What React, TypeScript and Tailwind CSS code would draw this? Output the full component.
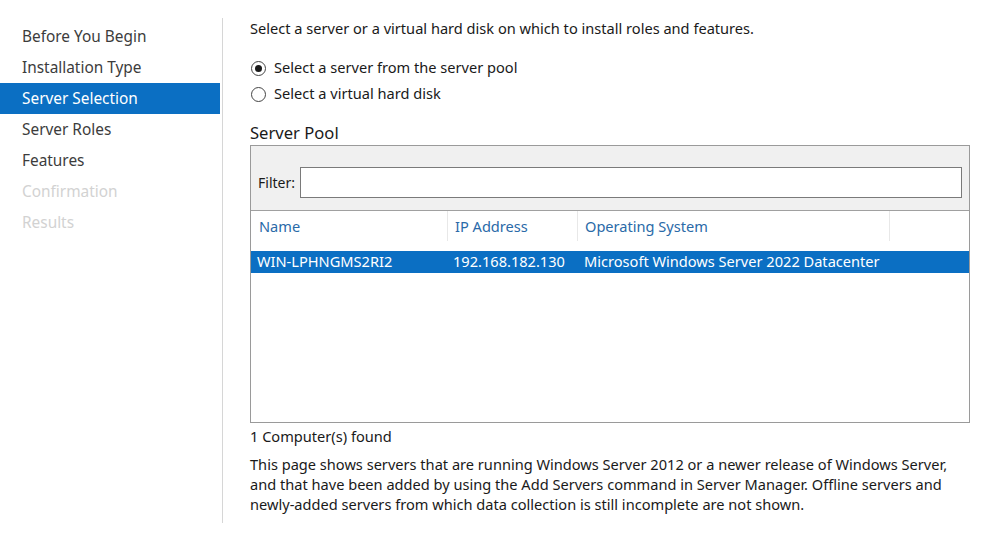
import React from 'react';

const steps = [
    { name: 'Before You Begin', state: 'done' },
    { name: 'Installation Type', state: 'done' },
    { name: 'Server Selection', state: 'active' },
    { name: 'Server Roles', state: 'done' },
    { name: 'Features', state: 'done' },
    { name: 'Confirmation', state: 'disabled' },
    { name: 'Results', state: 'disabled' },
];

function Radio({ checked, label }: { checked: boolean; label: string }) {
    return (
        <div className="flex items-center h-[26px]">
            <span className="w-[15px] h-[15px] rounded-full border border-[#444] bg-white flex items-center justify-center">
                {checked && <span className="w-[7px] h-[7px] rounded-full bg-[#1a1a1a]" />}
            </span>
            <span className="ml-[8px] text-[#1a1a1a]">{label}</span>
        </div>
    );
}

export default function App() {
    return (
        <div
            className="w-[982px] h-[543px] bg-white flex text-[14.6px] overflow-hidden"
            style={{ fontFamily: '"Noto Sans", "Open Sans", sans-serif' }}
        >
            {/* Wizard steps */}
            <div className="w-[222px] pt-[21px] shrink-0">
                {steps.map((s) => (
                    <div
                        key={s.name}
                        className={`h-[31px] pl-[22px] mr-[2px] flex items-center text-[15.4px] ${
                            s.state === 'active'
                                ? 'bg-[#0b6fc3] text-white'
                                : s.state === 'disabled'
                                  ? 'text-[#d2d2d2]'
                                  : 'text-[#3c3c3c]'
                        }`}
                    >
                        {s.name}
                    </div>
                ))}
            </div>

            {/* Divider */}
            <div className="w-px bg-[#d6d6d6] mt-[18px] mb-[20px] shrink-0" />

            {/* Main */}
            <div className="flex-1 pl-[27px] pr-[12px] pt-[17px]">
                <div className="text-[#1a1a1a] leading-[22px]">
                    Select a server or a virtual hard disk on which to install roles and features.
                </div>

                <div className="mt-[16px] ml-[1px]">
                    <Radio checked label="Select a server from the server pool" />
                    <Radio checked={false} label="Select a virtual hard disk" />
                </div>

                <div className="mt-[14px] text-[16.6px] text-[#1a1a1a] leading-[24px]">Server Pool</div>

                <div className="w-[720px] h-[278px] border border-[#9a9a9a] flex flex-col">
                    <div className="h-[65px] bg-[#f0f0f0] border-b border-[#a0a0a0] flex items-center pl-[7px] pr-[7px] pt-[8px]">
                        <span className="text-[#1a1a1a] text-[14px]">Filter:</span>
                        <div className="ml-[5px] flex-1 h-[31px] bg-white border border-[#7a7a7a]" />
                    </div>

                    <div className="flex-1 bg-white">
                        <div className="h-[40px] flex text-[#2a6aa8]">
                            <div className="w-[197px] pl-[8px] pt-[4px] leading-[22px] border-r border-[#e8e8e8] mb-[10px]">Name</div>
                            <div className="w-[130px] pl-[7px] pt-[4px] leading-[22px] border-r border-[#e8e8e8] mb-[10px]">IP Address</div>
                            <div className="w-[312px] pl-[7px] pt-[4px] leading-[22px] border-r border-[#e8e8e8] mb-[10px]">Operating System</div>
                        </div>
                        <div className="h-[22px] bg-[#0b6fc3] text-white flex items-center">
                            <div className="w-[197px] pl-[6px]">WIN-LPHNGMS2RI2</div>
                            <div className="w-[130px] pl-[5px]">192.168.182.130</div>
                            <div className="pl-[6px]">Microsoft Windows Server 2022 Datacenter</div>
                        </div>
                    </div>
                </div>

                <div className="mt-[2px] text-[#1a1a1a] leading-[22px]">1 Computer(s) found</div>

                <p className="mt-[7px] text-[#1a1a1a] leading-[20px] w-[722px]">
                    This page shows servers that are running Windows Server 2012 or a newer release of Windows Server, and that have been added by using the Add Servers command in Server Manager. Offline servers and newly-added servers from which data collection is still incomplete are not shown.
                </p>
            </div>
        </div>
    );
}
